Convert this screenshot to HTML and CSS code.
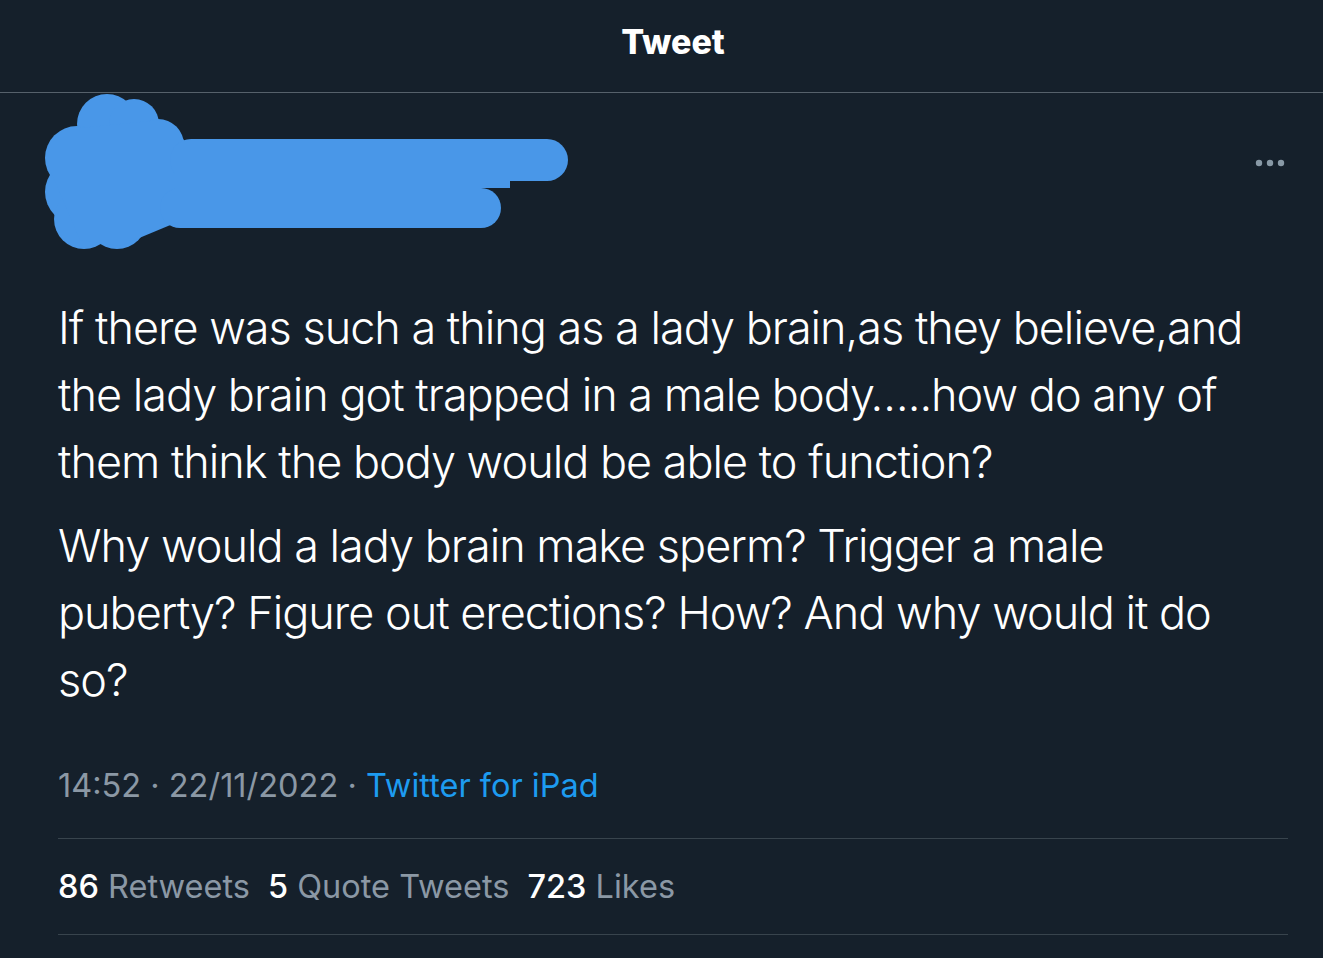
FILE: index.html
```html
<!DOCTYPE html>
<html lang="en">
<head>
<meta charset="utf-8">
<title>Tweet</title>
<link rel="stylesheet" href="styles.css">
</head>
<body>
<header class="topbar"><h1 class="title">Tweet</h1></header>
<main class="tweet">
  <div class="author">
    <svg class="scribble" width="530" height="170" viewBox="44 93 530 170" aria-hidden="true">
      <g fill="#4997e8">
        <circle cx="107" cy="124" r="30"/>
        <circle cx="134" cy="124" r="25"/>
        <circle cx="158" cy="145" r="26"/>
        <circle cx="77" cy="158" r="32"/>
        <circle cx="77" cy="192" r="32"/>
        <circle cx="84" cy="219" r="30"/>
        <circle cx="117" cy="219" r="30"/>
        <polygon points="80,128 160,120 184,140 192,216 120,246 80,240 46,160"/>
        <rect x="170" y="139" width="398" height="42" rx="21"/>
        <rect x="160" y="188" width="341" height="40" rx="20"/>
        <rect x="175" y="150" width="260" height="55"/>
        <rect x="420" y="170" width="90" height="18"/>
      </g>
    </svg>
    <svg class="more" width="30" height="8" viewBox="0 0 30 8" aria-hidden="true">
      <circle cx="4" cy="4" r="3.2" fill="#8899a6"/>
      <circle cx="15" cy="4" r="3.2" fill="#8899a6"/>
      <circle cx="26" cy="4" r="3.2" fill="#8899a6"/>
    </svg>
  </div>
  <div class="body">
    <p>If there was such a thing as a lady brain,as they believe,and<br>the lady brain got trapped in a male body…..how do any of<br>them think the body would be able to function?</p>
    <p>Why would a lady brain make sperm? Trigger a male<br>puberty? Figure out erections? How? And why would it do<br>so?</p>
  </div>
  <div class="meta">14:52 · 22/11/2022 · <span class="source">Twitter for iPad</span></div>
  <div class="stats">
    <span class="stat"><b>86</b> Retweets</span>
    <span class="stat"><b>5</b> Quote Tweets</span>
    <span class="stat"><b>723</b> Likes</span>
  </div>
</main>
</body>
</html>
```
FILE: styles.css
```css
html, body {
  margin: 0;
  padding: 0;
  background: #15202b;
  height: 100%;
}
body {
  font-family: Inter, Roboto, "Liberation Sans", sans-serif;
  color: #ffffff;
}
.topbar {
  height: 93px;
  border-bottom: 1px solid #56616b;
  display: flex;
  align-items: center;
  justify-content: center;
  padding-left: 23px;
  box-sizing: border-box;
}
.title {
  margin: 0;
  font-size: 34px;
  font-weight: 800;
  letter-spacing: 0;
  color: #ffffff;
  line-height: 1;
  padding-bottom: 8px;
}
.tweet {
  padding: 0 35px 0 58px;
}
.author {
  height: 201px;
  display: flex;
  align-items: flex-start;
}
.scribble {
  display: block;
  margin-left: -14px;
  flex: none;
}
.more {
  display: block;
  margin-left: auto;
  margin-top: 66px;
  margin-right: 3px;
  flex: none;
}
.body p {
  margin: 0;
  font-size: 45px;
  line-height: 67px;
  font-weight: 300;
  letter-spacing: -1px;
  white-space: nowrap;
}
.body p + p {
  margin-top: 17px;
}
.meta {
  margin-top: 53px;
  padding-bottom: 32px;
  font-size: 32.5px;
  line-height: 40px;
  color: #8b98a5;
  font-weight: 400;
}
.source {
  color: #1d9bf0;
}
.stats {
  border-top: 1px solid #38444d;
  border-bottom: 1px solid #38444d;
  padding: 28px 0 27px;
  font-size: 32.5px;
  line-height: 40px;
  color: #8b98a5;
  display: flex;
  gap: 18px;
}
.stat b {
  color: #ffffff;
  font-weight: 500;
}
```
